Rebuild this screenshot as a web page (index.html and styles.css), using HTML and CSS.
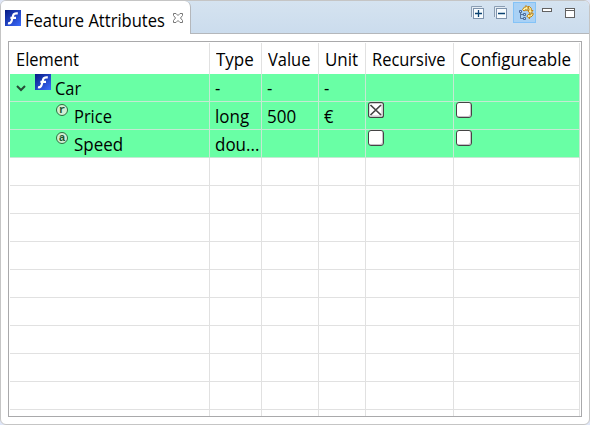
FILE: index.html
```html
<!DOCTYPE html>
<html lang="en">
<head>
<meta charset="utf-8">
<title>Feature Attributes</title>
<link rel="stylesheet" href="styles.css">
</head>
<body>
<svg width="0" height="0" class="defs">
  <defs>
    <linearGradient id="blue" x1="0" y1="0" x2="1" y2="1"><stop offset="0" stop-color="#061b83"/><stop offset="1" stop-color="#3c6cff"/></linearGradient>
    <symbol id="feature" viewBox="0 0 16 16">
      <rect width="16" height="16" fill="url(#blue)"/>
      <path d="M3 13.2Q5.8 13.8 6.6 11L8.2 5.2Q8.8 3 12.8 3.4M5.4 7.9H11" fill="none" stroke="#fff" stroke-width="2.2"/>
    </symbol>
  </defs>
</svg>
<main class="view">
  <header class="bar">
    <div class="tab">
      <svg class="logo" width="16" height="16"><use href="#feature"/></svg>
      <span class="title">Feature Attributes</span>
      <svg class="close" width="12" height="12" viewBox="0 0 12 12"><path d="M1.5 1.5H4L6 3.5L8 1.5H10.5V3.5L8.5 6L10.5 8.5V10.5H8L6 8.5L4 10.5H1.5V8.5L3.5 6L1.5 3.5Z" fill="#fff" stroke="#777" stroke-width="1"/></svg>
    </div>
    <div class="tools">
      <svg class="box" width="14" height="14" viewBox="0 0 14 14"><rect x="1" y="1" width="10" height="10" fill="#e4edf5"/><path d="M.5 11V.5H11" fill="none" stroke="#8b9eb3"/><rect x="2.5" y="2.5" width="10" height="10" fill="#f7fcff" stroke="#7f94ad"/><path d="M4 7.5H11M7.5 4V11" stroke="#0b4372" stroke-width="1.3"/></svg>
      <svg class="box" width="14" height="14" viewBox="0 0 14 14"><rect x="1" y="1" width="10" height="10" fill="#e4edf5"/><path d="M.5 11V.5H11" fill="none" stroke="#8b9eb3"/><rect x="2.5" y="2.5" width="10" height="10" fill="#f7fcff" stroke="#7f94ad"/><path d="M4 7.5H11" stroke="#0b4372" stroke-width="1.3"/></svg>
      <div class="active">
        <svg width="16" height="16" viewBox="0 0 16 16">
          <path d="M2.5 7V13.5H6M2.5 9.5H6" fill="none" stroke="#56739c"/>
          <path d="M1.5 5.5h2v2h-2zM5.5 8.5h2v2h-2zM5.5 12.5h2v2h-2z" fill="#bcdcf5" stroke="#4c6c9c"/>
          <path d="M4.5 4.5L6.5 2H8V.5L10.5 3L8 5.8V4.5L6 6ZM10 1.5H11.5L13.3 3.5V5.5H15L12.2 8.5L9.5 5.5H11V4ZM15 8V10L13 12H11.5V13.8L8.8 11L11.5 8.5V10H12.5L13.5 8.2Z" fill="#fff0a0" stroke="#be8214" stroke-width="1"/>
        </svg>
      </div>
      <svg class="min" width="10" height="4" viewBox="0 0 10 4"><rect x=".5" y=".5" width="9" height="3" fill="#fff" stroke="#626262"/></svg>
      <svg class="max" width="10" height="10" viewBox="0 0 10 10"><rect x=".5" y=".5" width="9" height="9" fill="#fff" stroke="#626262"/><path d="M0 2.5H10" stroke="#626262"/></svg>
    </div>
  </header>
  <section class="table">
    <div class="row head"><div><span class="t">Element</span></div><div><span class="t wide">Type</span></div><div><span class="t">Value</span></div><div><span class="t wide">Unit</span></div><div><span class="t">Recursive</span></div><div><span class="t wide">Configureable</span></div></div>
    <div class="row green"><div class="tree"><svg class="chevron" width="10" height="7" viewBox="0 0 10 7"><path d="M1 1L5 5L9 1" fill="none" stroke="#264d36" stroke-width="2"/></svg><svg class="node" width="16" height="16"><use href="#feature"/></svg><span class="t">Car</span></div><div><span class="t">-</span></div><div><span class="t">-</span></div><div><span class="t">-</span></div><div></div><div></div></div>
    <div class="row green"><div class="tree leaf"><i class="badge">r</i><span class="t">Price</span></div><div><span class="t wide">long</span></div><div><span class="t wide">500</span></div><div><span class="t">€</span></div><div class="cell"><svg width="16" height="16" viewBox="0 0 16 16"><rect x=".6" y=".6" width="14.8" height="14.8" rx="2" fill="#fff" stroke="#444" stroke-width="1.2"/><path d="M2 14H14V2" fill="none" stroke="#c8bfc8"/><path d="M2.5 3L13 13M13 3L2.5 13" stroke="#444" stroke-width="1.7"/></svg></div><div class="cell"><i class="check"></i></div></div>
    <div class="row green"><div class="tree leaf"><i class="badge">a</i><span class="t wide">Speed</span></div><div><span class="t wide">dou...</span></div><div></div><div></div><div class="cell"><i class="check"></i></div><div class="cell"><i class="check"></i></div></div>
    <div class="row"><div></div><div></div><div></div><div></div><div></div><div></div></div>
    <div class="row"><div></div><div></div><div></div><div></div><div></div><div></div></div>
    <div class="row"><div></div><div></div><div></div><div></div><div></div><div></div></div>
    <div class="row"><div></div><div></div><div></div><div></div><div></div><div></div></div>
    <div class="row"><div></div><div></div><div></div><div></div><div></div><div></div></div>
    <div class="row"><div></div><div></div><div></div><div></div><div></div><div></div></div>
    <div class="row"><div></div><div></div><div></div><div></div><div></div><div></div></div>
    <div class="row"><div></div><div></div><div></div><div></div><div></div><div></div></div>
    <div class="row"><div></div><div></div><div></div><div></div><div></div><div></div></div>
    <div class="row last"><div></div><div></div><div></div><div></div><div></div><div></div></div>
  </section>
</main>
</body>
</html>
```
FILE: styles.css
```css
* { box-sizing: border-box; }
body { margin: 0; background: #dfe6f7; color: #000; font: 17.5px/24px "Open Sans", "Noto Sans", sans-serif; }
svg { display: block; flex: none; }
.defs { position: absolute; }
.view { width: 590px; height: 425px; border: 1px solid #c5c5c5; border-radius: 6px; background: #fff; overflow: hidden; }
.bar { height: 33px; display: flex; justify-content: space-between; background: linear-gradient(#d5e3f0, #cbdced); border-bottom: 1px solid #b4b7bb; }
.tab { width: 190px; height: 33px; display: flex; background: #fff; border-right: 1px solid #b4b7bb; border-radius: 0 6px 0 0; padding-left: 4px; }
.logo { margin-top: 9px; }
.title { width: 147px; margin: 7px 0 0 4px; white-space: nowrap; transform: scaleX(.945); transform-origin: 0 0; }
.close { margin: 11px 0 0 0; }
.tools { display: flex; padding-right: 14px; }
.box { margin: 5px 9px 0 0; }
.active { width: 23px; height: 21px; margin: 1px 6px 0 -4px; padding: 2px 0 0 4px; border: 1px solid #84c3f7; background: #a9d1f5; }
.min { margin: 7px 13px 0 0; }
.max { margin-top: 7px; }
.table { width: 574px; height: 376px; margin: 7px 0 0 7px; border: 1px solid #a9a9ab; padding: 1px; overflow: hidden; }
.row { display: grid; grid-template-columns: 200px 52px 57px 47px 88px 126px; height: 28px; }
.row > div { border-right: 1px solid #e1e1e1; border-bottom: 1px solid #e1e1e1; padding: 2px 0 0 5px; white-space: nowrap; min-width: 0; }
.head { height: 31px; }
.row.head > div { border-bottom: 0; padding: 4px 0 0 6px; }
.green { background: #69ffa5; }
.green > div { border-color: #c5e9d3; }
.t { display: inline-block; transform: scaleX(.94); transform-origin: 0 0; }
.wide { transform: scaleX(.97); }
.row > .tree { display: flex; padding: 0 0 0 6px; }
.tree .t { margin-top: 2px; }
.chevron { margin: 11px 9px 0 0; }
.node { margin-right: 4px; }
.row > .leaf { padding-left: 46px; }
.badge { width: 12px; height: 12px; margin: 2px 6px 0 0; border: 1px solid #2b6f40; border-radius: 50%; background: #d2efd4; color: #1d5530; font: bold 11px/10px "Liberation Mono", monospace; text-align: center; flex: none; }
.row > .cell { padding: 0 0 0 2px; }
.check { display: block; width: 16px; height: 16px; border: 1px solid #444; border-radius: 3px; background: #fff; box-shadow: inset -1px -1px #c8bfc8; }
.last { height: 6px; }
.last > div { border-bottom: 0; }
```
